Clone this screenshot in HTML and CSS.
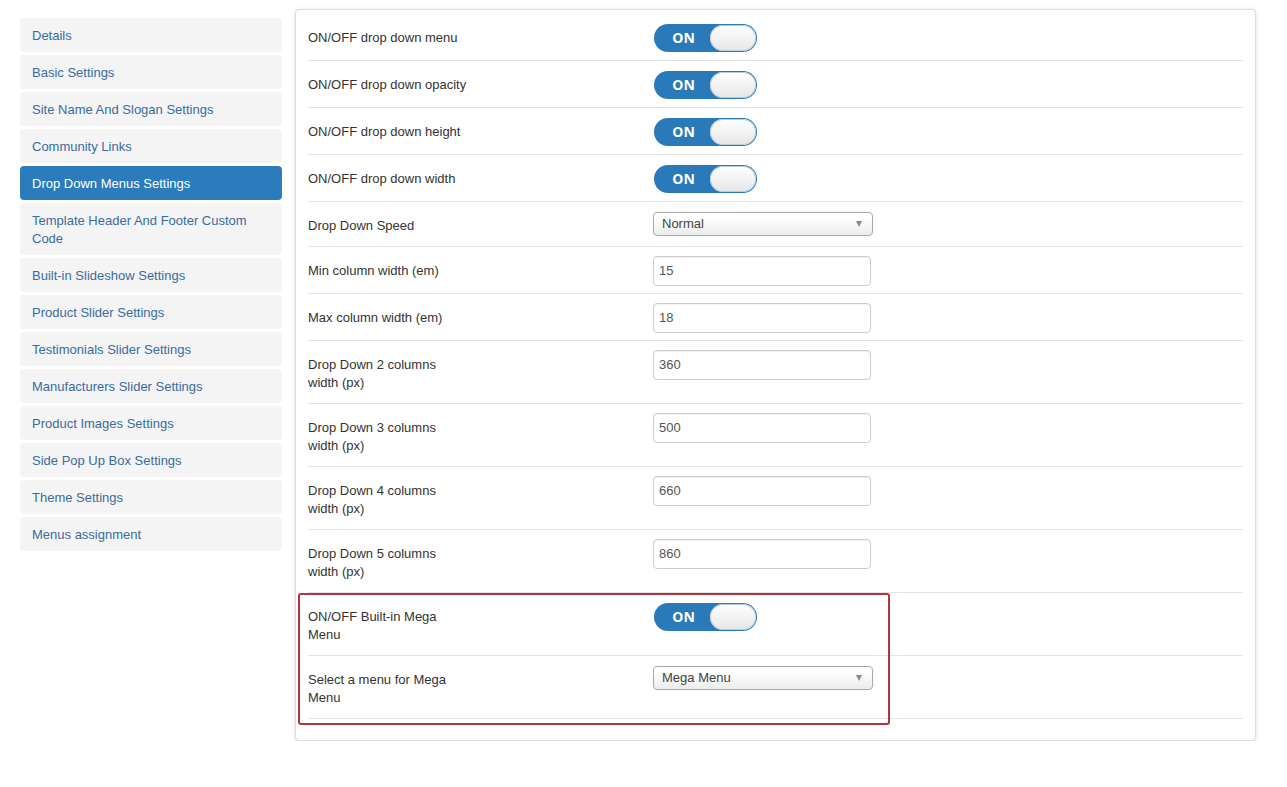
FILE: index.html
```html
<!DOCTYPE html>
<html lang="en">
<head>
<meta charset="utf-8">
<title>Drop Down Menus Settings</title>
<link rel="stylesheet" href="styles.css">
</head>
<body>
<div class="page">
  <ul class="sidebar">
    <li class="nav-item">Details</li>
    <li class="nav-item">Basic Settings</li>
    <li class="nav-item">Site Name And Slogan Settings</li>
    <li class="nav-item">Community Links</li>
    <li class="nav-item active">Drop Down Menus Settings</li>
    <li class="nav-item">Template Header And Footer Custom Code</li>
    <li class="nav-item">Built-in Slideshow Settings</li>
    <li class="nav-item">Product Slider Settings</li>
    <li class="nav-item">Testimonials Slider Settings</li>
    <li class="nav-item">Manufacturers Slider Settings</li>
    <li class="nav-item">Product Images Settings</li>
    <li class="nav-item">Side Pop Up Box Settings</li>
    <li class="nav-item">Theme Settings</li>
    <li class="nav-item">Menus assignment</li>
  </ul>

  <div class="panel">
    <div class="row">
      <div class="label">ON/OFF drop down menu</div>
      <div class="control"><div class="toggle"><span class="toggle-on">ON</span><span class="knob"></span></div></div>
    </div>
    <div class="row">
      <div class="label">ON/OFF drop down opacity</div>
      <div class="control"><div class="toggle"><span class="toggle-on">ON</span><span class="knob"></span></div></div>
    </div>
    <div class="row">
      <div class="label">ON/OFF drop down height</div>
      <div class="control"><div class="toggle"><span class="toggle-on">ON</span><span class="knob"></span></div></div>
    </div>
    <div class="row">
      <div class="label">ON/OFF drop down width</div>
      <div class="control"><div class="toggle"><span class="toggle-on">ON</span><span class="knob"></span></div></div>
    </div>
    <div class="row">
      <div class="label">Drop Down Speed</div>
      <div class="control"><div class="select"><span>Normal</span><span class="caret"></span></div></div>
    </div>
    <div class="row">
      <div class="label">Min column width (em)</div>
      <div class="control"><div class="input">15</div></div>
    </div>
    <div class="row">
      <div class="label">Max column width (em)</div>
      <div class="control"><div class="input">18</div></div>
    </div>
    <div class="row">
      <div class="label">Drop Down 2 columns width (px)</div>
      <div class="control"><div class="input">360</div></div>
    </div>
    <div class="row">
      <div class="label">Drop Down 3 columns width (px)</div>
      <div class="control"><div class="input">500</div></div>
    </div>
    <div class="row">
      <div class="label">Drop Down 4 columns width (px)</div>
      <div class="control"><div class="input">660</div></div>
    </div>
    <div class="row">
      <div class="label">Drop Down 5 columns width (px)</div>
      <div class="control"><div class="input">860</div></div>
    </div>
    <div class="highlight">
      <div class="row">
        <div class="label">ON/OFF Built-in Mega Menu</div>
        <div class="control"><div class="toggle"><span class="toggle-on">ON</span><span class="knob"></span></div></div>
      </div>
      <div class="row">
        <div class="label">Select a menu for Mega Menu</div>
        <div class="control"><div class="select"><span>Mega Menu</span><span class="caret"></span></div></div>
      </div>
    </div>
  </div>
</div>
</body>
</html>
```

FILE: styles.css
```css
* { box-sizing: border-box; }

body {
  margin: 0;
  background: #ffffff;
  font-family: "Liberation Sans", Arial, sans-serif;
  font-size: 13px;
  line-height: 18px;
  color: #333333;
}

.page {
  display: flex;
  align-items: flex-start;
  gap: 13px;
  padding: 9px 31px 0 20px;
}

.sidebar {
  list-style: none;
  margin: 9px 0 0;
  padding: 0;
  width: 262px;
  flex: none;
  display: flex;
  flex-direction: column;
  gap: 3px;
}

.nav-item {
  background: #f4f4f5;
  border-radius: 4px;
  padding: 9px 12px 7px;
  color: #3a6c9e;
}

.nav-item.active {
  background: #2b7bbd;
  color: #ffffff;
}

.panel {
  position: relative;
  flex: 1;
  border: 1px solid #dcdcdc;
  border-radius: 4px;
  box-shadow: 0 1px 4px rgba(0, 0, 0, 0.14);
  padding: 4px 12px 21px;
  background: #ffffff;
}

.row {
  display: grid;
  grid-template-columns: 345px 1fr;
  padding: 9px 0 7px;
  border-bottom: 1px solid #e3e3e3;
}

.label {
  max-width: 160px;
  padding-top: 6px;
  margin-bottom: 4px;
  color: #333333;
}

.control {
  display: flex;
  align-items: flex-start;
}

.toggle {
  margin: 1px 0 1px 1px;
  width: 103px;
  height: 28px;
  border-radius: 14px;
  background: #2a7ab9;
  display: flex;
  align-items: center;
  padding: 1px;
}

.toggle-on {
  flex: 1;
  text-align: center;
  padding-left: 2px;
  color: #ffffff;
  font-family: "Open Sans", "DejaVu Sans", sans-serif;
  font-weight: 700;
  font-size: 14px;
}

.knob {
  width: 46px;
  height: 26px;
  border-radius: 13px;
  background: linear-gradient(#ffffff, #e6e6e6);
  box-shadow: inset 0 0 0 1px #b9cde0;
}

.select {
  margin-top: 1px;
  width: 220px;
  height: 24px;
  border: 1px solid #aaaaaa;
  border-radius: 4px;
  background: linear-gradient(#ffffff 20%, #ececec);
  box-shadow: 0 0 2px rgba(0, 0, 0, 0.08);
  display: flex;
  align-items: center;
  justify-content: space-between;
  padding: 0 10px 0 8px;
  color: #444444;
}

.caret {
  width: 0;
  height: 0;
  border-left: 3.5px solid transparent;
  border-right: 3.5px solid transparent;
  border-top: 6px solid #888888;
}

.input {
  width: 218px;
  height: 30px;
  border: 1px solid #cccccc;
  border-radius: 4px;
  padding: 5px 5px;
  color: #555555;
  box-shadow: inset 0 1px 1px rgba(0, 0, 0, 0.06);
}

.highlight {
  position: relative;
}

.highlight::after {
  content: "";
  position: absolute;
  top: 0;
  left: -10px;
  width: 588px;
  height: 128px;
  border: 2px solid #b3353b;
  border-radius: 3px;
  pointer-events: none;
}
```
